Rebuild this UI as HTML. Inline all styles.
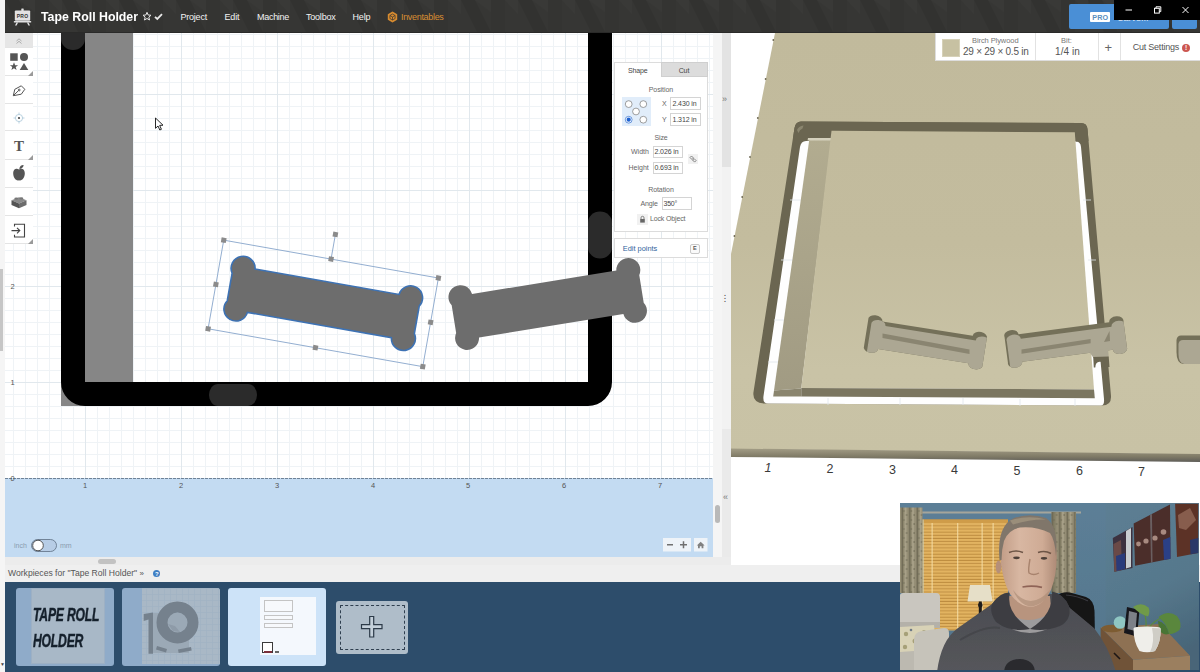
<!DOCTYPE html>
<html lang="en">
<head>
<meta charset="utf-8">
<title>Tape Roll Holder - Easel</title>
<style>
*{box-sizing:border-box;margin:0;padding:0}
html,body{width:1200px;height:672px;overflow:hidden;background:#fff}
body{position:relative;font-family:"Liberation Sans",sans-serif;color:#444;font-size:9px}
.abs{position:absolute}
.t{position:absolute;white-space:nowrap;line-height:1}
/* header */
#hdr{left:5px;top:0;width:1195px;height:33px;background:#363634;border-bottom:1px solid #2a2a29}
#hdr .m{color:#f2f2f2;font-size:9px;top:12.5px}
#title{color:#fff;font-weight:bold;font-size:13.5px;left:36px;top:10px;transform:scaleX(.913);transform-origin:0 0}
/* canvas */
#cv{left:5px;top:33px;width:708px;height:524px;overflow:hidden;background:#fff}
/* toolbar */
#tb{left:5px;top:33px;width:28px}
#tb .b{position:absolute;left:0;width:28px;background:#fff;border-bottom:1px solid #e4e4e4}
/* panel */
.pn{background:#fff;border:1px solid #dcdcdc}
.inp{position:absolute;border:1px solid #d4d4d4;background:#fff;height:12px}
.lb{color:#666;font-size:7px}
/* bottom */
#navy{left:5px;top:582px;width:1195px;height:90px;background:#2d4d6b}
</style>
</head>
<body>
<!-- left strip -->
<div class="abs" style="left:0;top:0;width:5px;height:672px;background:#f5f5f5"></div>
<div class="abs" style="left:0;top:268.500px;width:3px;height:82px;background:#c6c6c6"></div>
<div class="t" style="left:0;top:662px;font-size:5px;color:#444">▼</div>

<!-- LEFT CANVAS -->
<div id="cv" class="abs">
<svg class="abs" style="left:0;top:0" width="708" height="524" viewBox="5 33 708 524" font-family="Liberation Sans, sans-serif">
<defs>
<pattern id="gmin" x="85" y="478" width="12" height="12" patternUnits="userSpaceOnUse"><path d="M0.5 0V12M0 0.5H12" stroke="#eff3f6" stroke-width="1" fill="none"/></pattern>
<pattern id="gmaj" x="85" y="478" width="96" height="96" patternUnits="userSpaceOnUse"><path d="M0.5 0V96M0 0.5H96" stroke="#e1e8ed" stroke-width="1" fill="none"/></pattern>
<g id="bone"><rect x="-95" y="-22" width="190" height="44"/><circle cx="-85" cy="-21.5" r="12"/><circle cx="85" cy="-21.5" r="12"/><circle cx="-85" cy="21.5" r="12"/><circle cx="85" cy="21.5" r="12"/></g>
<path id="boneo" d="M-73.1,-22 H73.1 A12,12 0 1 1 95,-14 V14 A12,12 0 1 1 73.1,22 H-73.1 A12,12 0 1 1 -95,14 V-14 A12,12 0 1 1 -73.1,-22 Z"/>
</defs>
<rect x="5" y="33" width="708" height="446" fill="#fff"/>
<rect x="5" y="33" width="708" height="446" fill="url(#gmin)"/>
<rect x="5" y="33" width="708" height="446" fill="url(#gmaj)"/>
<!-- material shapes -->
<rect x="85" y="33" width="48" height="349" fill="#868686"/>
<rect x="61" y="382" width="24" height="24" fill="#868686"/>
<path d="M61,33 V382 A24,24 0 0 0 85,406 H588 A24,24 0 0 0 612,382 V33 H588 V382 H85 V33 Z" fill="#000"/>
<path d="M61,33 H85 V39 A12,11 0 0 1 61,39 Z" fill="#2b2b2b"/>
<rect x="588" y="211.500" width="24" height="47" rx="12" ry="11" fill="#2b2b2b"/>
<rect x="209" y="384" width="48" height="22" rx="9" ry="11" fill="#2b2b2b"/>
<!-- bone 2 -->
<use href="#boneo" transform="translate(547.7,304) rotate(-9.2)" fill="#6d6d6d"/>
<!-- bone 1 selected -->
<use href="#boneo" transform="translate(323.25,303.4) rotate(10)" fill="#6d6d6d" stroke="#3d72b4" stroke-width="1.6"/>
<g transform="translate(323.25,303.4) rotate(10)">
<rect x="-109" y="-45" width="218" height="90" fill="none" stroke="#8fabce" stroke-width="0.9"/>
<line x1="0" y1="-45" x2="0" y2="-70" stroke="#8fabce" stroke-width="0.9"/>
<g fill="#8b8b8b"><rect x="-111.500" y="-47.500" width="5" height="5"/><rect x="-2.500" y="-47.500" width="5" height="5"/><rect x="106.500" y="-47.500" width="5" height="5"/><rect x="-111.500" y="-2.500" width="5" height="5"/><rect x="106.500" y="-2.500" width="5" height="5"/><rect x="-111.500" y="42.500" width="5" height="5"/><rect x="-2.500" y="42.500" width="5" height="5"/><rect x="106.500" y="42.500" width="5" height="5"/><rect x="-2.500" y="-72.500" width="5" height="5"/></g>
</g>
<!-- blue margin -->
<rect x="5" y="478" width="708" height="79" fill="#c3dbf2"/>
<line x1="5" y1="478.500" x2="713" y2="478.500" stroke="#6f8296" stroke-width="1" stroke-dasharray="3 1"/>
<g font-size="7.5" fill="#555" text-anchor="middle">
<text x="85" y="488">1</text><text x="181" y="488">2</text><text x="277" y="488">3</text><text x="373" y="488">4</text><text x="468" y="488">5</text><text x="564" y="488">6</text><text x="660" y="488">7</text>
<text x="12.500" y="289">2</text><text x="12.500" y="385">1</text><text x="12.500" y="481">0</text>
</g>
<!-- inch/mm toggle -->
<text x="14" y="548" font-size="7" fill="#8a9bb0">inch</text>
<rect x="31.500" y="539.500" width="25" height="12" rx="6" fill="#b7cde6" stroke="#5d6f83" stroke-width="0.8"/>
<circle cx="38" cy="545.500" r="5.300" fill="#fff" stroke="#444" stroke-width="0.9"/>
<text x="60" y="548" font-size="7" fill="#8a9bb0">mm</text>
<!-- zoom controls -->
<rect x="663" y="538" width="28" height="13.500" fill="#eef3f8"/>
<rect x="694" y="538" width="13.500" height="13.500" fill="#eef3f8"/>
<path d="M667,544.800h6 M680,544.800h7 M683.500,541.300v7" stroke="#707070" stroke-width="1.500" fill="none"/>
<path d="M696.800,545.500 L700.700,541.800 L704.600,545.500 H703.400 V548.300 H701.600 V546.200 H699.800 V548.300 H698 V545.500 Z" fill="#808080"/>
<!-- cursor -->
<path d="M155.500,118 V128.300 L158,126 L159.800,130 L161.400,129.300 L159.700,125.400 L163,125.200 Z" fill="#fff" stroke="#111" stroke-width="0.9" stroke-linejoin="round"/>
</svg>

</div>

<!-- TOOLBAR -->
<div id="tb" class="abs">
<div class="b" style="top:0;height:15px;background:#e6e6e6"></div>
<svg class="abs" style="left:10px;top:4px" width="8" height="8" viewBox="0 0 8 8"><path d="M1.500,4 L4,1.800 L6.500,4 M1.500,6.500 L4,4.300 L6.500,6.500" fill="none" stroke="#a4a4a4" stroke-width="0.900"/></svg>
<div class="b" style="top:15px;height:28px"></div>
<div class="b" style="top:43px;height:28px"></div>
<div class="b" style="top:71px;height:27px"></div>
<div class="b" style="top:98px;height:29px"></div>
<div class="b" style="top:127px;height:28px"></div>
<div class="b" style="top:155px;height:28px"></div>
<div class="b" style="top:183px;height:28px"></div>
<svg class="abs" style="left:0;top:0" width="28" height="212" viewBox="5 33 28 212" font-family="Liberation Serif, serif">
<!-- shapes -->
<g fill="#555"><rect x="10.200" y="53.300" width="7.500" height="7.500"/><circle cx="24" cy="57" r="4"/><path d="M14,62.300 L15.100,65.200 L18.100,65.300 L15.700,67.100 L16.600,70 L14,68.300 L11.400,70 L12.300,67.100 L9.900,65.300 L12.900,65.200 Z"/><path d="M24,63 L28.300,70 H19.700 Z"/></g>
<!-- corner triangles -->
<g fill="#9a9a9a"><path d="M33,71 V76 H28 Z"/><path d="M33,155 V160 H28 Z"/><path d="M33,239 V244 H28 Z"/></g>
<!-- pen -->
<g fill="none" stroke="#555" stroke-width="1"><path d="M13.300,95.700 L14.800,89.300 L21.300,85.800 L24.800,89.300 L21.300,94.200 Z"/><path d="M13.500,95.500 L18.500,90.600"/><circle cx="19.200" cy="90" r="0.900"/></g>
<!-- target -->
<g fill="none" stroke="#a9c6d8" stroke-width="0.800"><circle cx="19" cy="118" r="3.600"/><path d="M19,112.500v2 M19,121.500v2 M13.500,118h2 M22.500,118h2"/></g><circle cx="19" cy="118" r="1.100" fill="#444"/>
<!-- T -->
<text x="19" y="151.300" font-size="15" font-weight="bold" fill="#555" text-anchor="middle">T</text>
<!-- apple -->
<g fill="#555"><path d="M19,169.500 C17,168.200 13.200,168.500 13.200,173.500 C13.200,177.500 16,181.300 19,180.200 C22,181.300 24.800,177.500 24.800,173.500 C24.800,168.500 21,168.200 19,169.500 Z"/><path d="M19.300,169 C19.300,166.500 21.500,164.800 23.600,165 C23.600,167.300 21.600,169 19.300,169 Z"/></g>
<!-- brick -->
<g><path d="M11.500,200.300 L19,197.300 L26.500,200.300 L19,203.400 Z" fill="#8a8a8a"/><path d="M11.500,200.300 L19,203.400 V208.300 L11.500,205 Z" fill="#555"/><path d="M26.500,200.300 L19,203.400 V208.300 L26.500,205 Z" fill="#6c6c6c"/><ellipse cx="16.300" cy="198.600" rx="2" ry="1.100" fill="#777"/><ellipse cx="21.300" cy="198.400" rx="2" ry="1.100" fill="#777"/></g>
<!-- import -->
<g fill="none" stroke="#444" stroke-width="1.100"><path d="M14.500,226.500 V224.300 H24.500 V237 H14.500 V234.800"/><path d="M11.500,230.600 H19.500 M17,227.800 L19.800,230.600 L17,233.400"/></g>
</svg>

</div>

<!-- SHAPE PANEL -->
<div class="abs pn" style="left:614px;top:62px;width:94px;height:169.500px"></div>
<div class="abs" style="left:661px;top:62px;width:47px;height:15px;background:#dcdcdc;border:1px solid #cfcfcf"></div>
<div class="t lb" id="p1" style="left:628px;top:66.900px;color:#444;letter-spacing:-0.15px">Shape</div>
<div class="t lb" id="p2" style="left:678.700px;top:66.900px;color:#444;letter-spacing:-0.13px">Cut</div>
<div class="t lb" id="p3" style="left:648.700px;top:86.100px;letter-spacing:-0.05px">Position</div>
<div class="abs" style="left:622px;top:96.500px;width:29px;height:29px;background:#e1edfa"></div>
<svg class="abs" style="left:622px;top:96.500px" width="29" height="29" viewBox="622 96.500 29 29"><g fill="#fff" stroke="#777" stroke-width="0.700"><circle cx="628.700" cy="103.600" r="3.400"/><circle cx="643.300" cy="103.600" r="3.400"/><circle cx="636" cy="111" r="3.400"/><circle cx="643.300" cy="119.200" r="3.400"/><circle cx="628.700" cy="119.200" r="3.400" stroke="#2f6fd0"/></g><circle cx="628.700" cy="119.200" r="2.100" fill="#1f62d0"/></svg>
<div class="t lb" style="left:662px;top:100px">X</div>
<div class="inp" style="left:670px;top:96.500px;width:30.500px;height:13px"></div>
<div class="t lb" id="p4" style="left:672.500px;top:99.900px;color:#444;letter-spacing:-0.115px">2.430 in</div>
<div class="t lb" style="left:662px;top:116px">Y</div>
<div class="inp" style="left:670px;top:112.500px;width:30.500px;height:13px"></div>
<div class="t lb" id="p5" style="left:672.500px;top:115.700px;color:#444;letter-spacing:-0.115px">1.312 in</div>
<div class="t lb" id="p6" style="left:654.500px;top:134.400px;letter-spacing:-0.15px">Size</div>
<div class="t lb" id="p7" style="left:631px;top:148px">Width</div>
<div class="inp" style="left:652.500px;top:145.500px;width:30.500px;height:12px"></div>
<div class="t lb" id="p8" style="left:654.500px;top:148px;color:#444;letter-spacing:-0.115px">2.026 in</div>
<div class="t lb" id="p9" style="left:628.500px;top:163.900px">Height</div>
<div class="inp" style="left:652.500px;top:161.500px;width:30.500px;height:12px"></div>
<div class="t lb" id="p10" style="left:654.500px;top:163.900px;color:#444;letter-spacing:-0.115px">0.693 in</div>
<svg class="abs" style="left:688px;top:154px" width="10" height="10" viewBox="0 0 10 10"><rect x="0" y="0" width="10" height="10" fill="#f1f1f1"/><g fill="none" stroke="#777" stroke-width="0.900"><path d="M2,3.500 L3.500,2 L5.500,4 L4,5.500 Z M4.600,6 L6.100,4.600 L8.100,6.600 L6.600,8.100 Z"/></g></svg>
<div class="t lb" id="p11" style="left:648.200px;top:185.700px;letter-spacing:-0.07px">Rotation</div>
<div class="t lb" id="p12" style="left:640.600px;top:199.900px;letter-spacing:-0.18px">Angle</div>
<div class="inp" style="left:661.500px;top:197px;width:30px;height:12.500px"></div>
<div class="t lb" id="p13" style="left:663.500px;top:199.900px;color:#444;letter-spacing:-0.25px">350°</div>
<svg class="abs" style="left:636.500px;top:213.500px" width="11" height="11" viewBox="0 0 11 11"><rect width="11" height="11" fill="#f1f1f1"/><rect x="3.200" y="5" width="4.600" height="3.600" fill="#666"/><path d="M4,5 V3.800 A1.500,1.500 0 0 1 7,3.800 V5" fill="none" stroke="#666" stroke-width="0.800"/></svg>
<div class="t lb" id="p14" style="left:649.900px;top:215.400px;letter-spacing:-0.14px">Lock Object</div>
<div class="abs pn" style="left:614px;top:237.500px;width:94px;height:20.500px"></div>
<div class="t lb" id="p15" style="left:622.800px;top:244.500px;color:#2f639c;font-size:7.400px">Edit points</div>
<div class="abs" style="left:689.500px;top:243.500px;width:10.500px;height:10px;border:1px solid #c9c9c9;border-radius:2px;background:#fafafa"></div>
<div class="t" style="left:693px;top:246px;font-size:5.500px;color:#555;font-weight:bold">E</div>


<!-- SCROLL + DIVIDER -->
<div class="abs" style="left:713px;top:33px;width:8.500px;height:524px;background:#f5f5f5"></div>
<div class="abs" style="left:715px;top:505px;width:5px;height:18px;background:#b9b9b9;border-radius:3px"></div>
<div class="abs" style="left:721.500px;top:33px;width:9.500px;height:524px;background:#f2f2f2"></div>
<div class="abs" style="left:721.500px;top:33px;width:9.500px;height:133.500px;background:#e3e3e3"></div>
<div class="abs" style="left:721.500px;top:428.500px;width:9.500px;height:128.500px;background:#eaeaea"></div>
<div class="t" style="left:722px;top:95px;font-size:9px;color:#777">»</div>
<div class="t" style="left:723px;top:493px;font-size:9px;color:#777">«</div>
<div class="t" style="left:724px;top:292px;font-size:7px;color:#555;line-height:3px;font-weight:bold">.<br>.<br>.</div>

<!-- 3D VIEW -->
<div class="abs" style="left:731px;top:33px;width:469px;height:532px;background:#fff;overflow:hidden">
<svg class="abs" style="left:0;top:0" width="469" height="532" viewBox="731 33 469 532" font-family="Liberation Sans, sans-serif">
<defs>
<path id="b3" d="M-76.200,-34 H76.200 A12,12 0 1 1 100,-32 V32 A12,12 0 1 1 76.200,34 H-76.200 A12,12 0 1 1 -100,32 V-32 A12,12 0 1 1 -76.200,-34 Z"/>
<clipPath id="cb1"><use href="#b3" transform="translate(925.400,342.300) rotate(9) scale(0.600,0.410)"/></clipPath>
<clipPath id="cb2"><use href="#b3" transform="translate(1065.700,342) rotate(-7.500) scale(0.600,0.410)"/></clipPath>
<linearGradient id="wd" x1="0" y1="33" x2="0" y2="455" gradientUnits="userSpaceOnUse"><stop offset="0" stop-color="#c1ba9c"/><stop offset="0.500" stop-color="#c3bc9e"/><stop offset="0.800" stop-color="#c9c3a6"/><stop offset="1" stop-color="#c8c2a5"/></linearGradient>
<linearGradient id="stp" x1="0" y1="138" x2="0" y2="390" gradientUnits="userSpaceOnUse"><stop offset="0" stop-color="#b2ac90"/><stop offset="1" stop-color="#a19b83"/></linearGradient>
<linearGradient id="fe" x1="0" y1="0" x2="0" y2="1"><stop offset="0" stop-color="#a39d86"/><stop offset="0.600" stop-color="#7f7a66"/><stop offset="1" stop-color="#5e5d58"/></linearGradient>
</defs>
<!-- board top -->
<path d="M775,33 H1200 V454.500 L731,449 V254 Z" fill="url(#wd)"/>
<g fill="#6b6651"><circle cx="773.300" cy="40" r="0.900"/><circle cx="765.600" cy="79" r="0.900"/><circle cx="757.800" cy="118" r="0.900"/><circle cx="750" cy="157" r="0.900"/><circle cx="742.200" cy="197" r="0.900"/><circle cx="734.400" cy="236" r="0.900"/></g>
<!-- board front edge -->
<path d="M731,448.500 L1200,454 V462 L731,457 Z" fill="url(#fe)"/>
<!-- pocket outer (walls) -->
<path id="pko" d="M801,121.500 L1081,123 Q1087,123 1087.500,129 L1111,396 Q1111.500,405.500 1102,405.500 L765,403.500 Q752,403 753.500,392 L794.500,128 Q795.500,121.500 801,121.500 Z" fill="#6b6651"/>
<!-- pocket floor (white) -->
<path d="M806,141 Q801,141 800,147 L763.500,396 Q762.500,403.500 768,403.500 L1101,405.500 Q1104.500,405.500 1104,399 L1081,147 Q1080.500,141.500 1076,141.500 Z" fill="#fefefe"/>
<g stroke="#dfe6ec" stroke-width="0.800"><path d="M790,200 h12 M781,260 h12 M774,320 h12 M768,362 h12 M1083,200 h8 M1088,260 h8 M1094,330 h8 M828,398 v7 M900,398 v7 M963,398 v7 M1020,399 v7 M1075,399 v7"/></g>
<!-- top wall -->
<path d="M801,121.500 L1081,123 Q1087,123 1087.500,129 L1088.500,141 L1076,141.500 L1074.800,132.300 L831.500,130.800 L830,138 L806,138 Q800,139 797.500,149 L793,138 L794.500,128 Q795.500,121.500 801,121.500 Z" fill="#6b6651"/>
<path d="M797,130 Q798.500,126 803.500,125.500 L802.500,128.500 Q799.500,129.500 798.500,133 Z" fill="#8b866f"/>
<!-- step (lower ledge) -->
<path d="M809.500,138 L831.500,138 L801.300,388.500 L774,390.500 Z" fill="url(#stp)"/>
<path d="M774,390.500 L801.300,388.500 L801.300,396.500 L773.200,396.500 Z" fill="#8a856e"/>
<path d="M808,138 h23 v2.500 h-23.500 Z" fill="#d5d1bd"/>
<!-- island top -->
<path d="M831.500,130.800 L1074.800,132.300 L1094,389.500 L801.300,388 Z" fill="url(#wd)"/>
<!-- island front face -->
<path d="M801.300,388 L1094,389.500 L1094.800,398.200 L801.300,396.500 Z" fill="#7b7660"/>
<!-- bone pocket 1 -->
<use href="#b3" transform="translate(925.400,342.300) rotate(9) scale(0.600,0.410)" fill="#747059"/>
<g clip-path="url(#cb1)"><use href="#b3" transform="translate(928.400,347) rotate(9) scale(0.600,0.410)" fill="#aca793"/>
<path d="M882.500,333.600 L969.500,349.600 L969.500,353.900 L882.500,337.900 Z" fill="#8a8571"/></g>
<!-- bone pocket 2 -->
<use href="#b3" transform="translate(1065.700,342) rotate(-7.500) scale(0.600,0.410)" fill="#747059"/>
<g clip-path="url(#cb2)"><use href="#b3" transform="translate(1068,346.500) rotate(-7.500) scale(0.600,0.410)" fill="#aca793"/>
<path d="M1021.500,349.500 L1090.600,339 L1090.600,343.300 L1021.500,353.800 Z" fill="#8a8571"/>
<path d="M1104,342 L1109.500,331 L1110,341 Z" fill="#8a8571"/></g>
<!-- right wall pieces around bone 2 -->
<path d="M1089,351.500 L1108,348.800 L1108.800,357.500 L1093.500,358 Z" fill="#aca793"/>
<path d="M1093.200,357 L1108.700,356.500 L1109.500,367 L1104.300,367 L1104,362 L1099.500,361.800 Q1095.500,362 1095.300,367.500 L1093.800,367.500 Z" fill="#6b6651"/>
<!-- third pocket at right edge -->
<path d="M1181,335.500 H1200 V364 H1183 Q1176.500,363 1176.500,352 V340 Q1177,335.500 1181,335.500 Z" fill="#747059"/>
<path d="M1183,340 H1200 V364 H1184 Q1178.500,363 1178.500,354 V344 Q1179,340 1183,340 Z" fill="#aca793"/>
<!-- axis numbers -->
<g font-size="12.500" fill="#3a3a3a" text-anchor="middle">
<text x="768" y="471.500" font-style="italic">1</text><text x="830" y="472.500">2</text><text x="892.500" y="473.500">3</text><text x="954.500" y="474">4</text><text x="1017" y="474.500">5</text><text x="1079.500" y="475">6</text><text x="1141.500" y="475.500">7</text>
</g>
</svg>

</div>

<!-- MATERIAL BAR -->
<div class="abs" style="left:935px;top:33px;width:265px;height:27.500px;background:#fff;border-left:1px solid #ddd;border-bottom:1px solid #ddd"></div>
<div class="abs" style="left:1035px;top:33px;width:1px;height:27px;background:#e2e2e2"></div>
<div class="abs" style="left:1098px;top:33px;width:1px;height:27px;background:#e2e2e2"></div>
<div class="abs" style="left:1120px;top:33px;width:1px;height:27px;background:#e2e2e2"></div>
<div class="abs" style="left:942px;top:38.500px;width:18px;height:18px;background:#c7c1a2;border:1px solid #d6d1b8"></div>
<div class="t" id="mb1" style="left:972px;top:37px;font-size:7.500px;color:#777;letter-spacing:-0.08px">Birch Plywood</div>
<div class="t" id="mb2" style="left:963px;top:47px;font-size:10px;color:#555;letter-spacing:-0.25px">29 × 29 × 0.5 in</div>
<div class="t" id="mb3" style="left:1061px;top:37px;font-size:7.500px;color:#777">Bit:</div>
<div class="t" id="mb4" style="left:1055px;top:47px;font-size:10px;color:#555;letter-spacing:0.09px">1/4 in</div>
<div class="t" id="mb5" style="left:1104.500px;top:40.500px;font-size:13px;color:#666">+</div>
<div class="t" id="mb6" style="left:1132.800px;top:42.500px;font-size:9px;color:#555;letter-spacing:-0.24px">Cut Settings</div>
<div class="abs" style="left:1182px;top:43.500px;width:8px;height:8px;border-radius:50%;background:#cc5750"></div>
<div class="t" style="left:1185px;top:44.500px;font-size:6.500px;color:#fff;font-weight:bold">!</div>


<!-- BOTTOM STRIPS -->
<div class="abs" style="left:5px;top:557px;width:726px;height:9px;background:#ececec"></div>
<div class="abs" style="left:98px;top:559px;width:18px;height:5px;background:#c2c2c2;border-radius:3px"></div>
<div class="abs" style="left:5px;top:565px;width:1195px;height:17px;background:#efefef"></div>
<div class="t" id="wplabel" style="left:8px;top:569px;font-size:8.6px;color:#555">Workpieces for "Tape Roll Holder" <span style="font-size:8px">»</span></div>
<div class="abs" style="left:153px;top:570px;width:7px;height:7px;border-radius:50%;background:#3f7fc4"></div>
<div class="t" style="left:155px;top:571px;font-size:6px;color:#fff;font-weight:bold">?</div>
<div id="navy" class="abs"></div>
<!-- thumb 1 -->
<div class="abs" style="left:16px;top:588px;width:98px;height:78px;background:#8fabc9;border-radius:3px;overflow:hidden">
<div class="abs" style="left:15px;top:0;width:74px;height:76px;background:#a8b8c7;border:1px solid #9db0c4"></div>
<div class="t" id="th1a" style="left:17px;top:17px;font-size:19px;font-weight:bold;font-style:italic;color:#15202c;-webkit-text-stroke:.5px #15202c;transform:scaleX(.64);transform-origin:0 0;letter-spacing:-.3px">TAPE ROLL</div>
<div class="t" id="th1b" style="left:17px;top:43px;font-size:19px;font-weight:bold;font-style:italic;color:#15202c;-webkit-text-stroke:.5px #15202c;transform:scaleX(.64);transform-origin:0 0;letter-spacing:-.3px">HOLDER</div>
</div>
<!-- thumb 2 -->
<div class="abs" style="left:122px;top:588px;width:98px;height:78px;background:#8fabc9;border-radius:3px;overflow:hidden">
<svg class="abs" style="left:0;top:0" width="98" height="78" viewBox="0 0 98 78">
<defs><pattern id="tg" width="6" height="6" patternUnits="userSpaceOnUse"><path d="M0.500 0V6M0 0.500H6" stroke="#9fb1c3" stroke-width="0.600" fill="none"/></pattern></defs>
<rect x="20" y="0" width="78" height="76" fill="#a9b8c6"/><rect x="20" y="0" width="78" height="76" fill="url(#tg)"/>
<rect x="28" y="25" width="39" height="40" fill="#9ba9b6"/>
<path d="M21.700,26 L31,24.500 V65.700 H26.500 V31.500 L21.700,33 Z" fill="#75818d"/>
<circle cx="55.500" cy="34.500" r="15.500" fill="none" stroke="#75818d" stroke-width="11"/>
<path d="M46,36 L51,43 L58,44 L53,38 Z" fill="#8e9ba8"/>
<path d="M35,58 L45,61 L44,64.500 L34,61.500 Z M56,61.500 L69,59 L69.700,62.500 L56.700,65 Z" fill="#75818d"/>
</svg>
</div>
<!-- thumb 3 (selected) -->
<div class="abs" style="left:228px;top:588px;width:98px;height:78px;background:#cde3f8;border-radius:3px;overflow:hidden">
<div class="abs" style="left:32px;top:9px;width:56px;height:58px;background:#f4f8fd"></div>
<div class="abs" style="left:36px;top:12px;width:29px;height:12px;border:1px solid #c4c4c4;background:#f7f9fc"></div>
<div class="abs" style="left:36px;top:27px;width:29px;height:5px;border:1px solid #c4c4c4;background:#f7f9fc"></div>
<div class="abs" style="left:36px;top:34.500px;width:29px;height:5px;border:1px solid #c4c4c4;background:#f7f9fc"></div>
<div class="abs" style="left:33.500px;top:54px;width:11px;height:11px;border:1.500px solid #3a3a3a;background:#fff"></div>
<div class="abs" style="left:36px;top:63px;width:8px;height:1.500px;background:#7b2f3a"></div>
<div class="abs" style="left:47px;top:63px;width:4px;height:1.500px;background:#666"></div>
</div>
<!-- add -->
<div class="abs" style="left:336px;top:601px;width:72px;height:53px;background:#afbdc9;border-radius:3px"></div>
<div class="abs" style="left:339.500px;top:605px;width:65.500px;height:45px;border:1.200px dashed #2f3f4f;border-radius:1px"></div>
<svg class="abs" style="left:360px;top:615px" width="24" height="24" viewBox="0 0 24 24"><path d="M9.700,1.500 H13.700 V9.700 H22 V13.700 H13.700 V22 H9.700 V13.700 H1.500 V9.700 H9.700 Z" fill="#c4d0da" stroke="#2c3a48" stroke-width="1.200"/></svg>


<!-- HEADER -->
<div id="hdr" class="abs">
<svg class="abs" style="left:0;top:0" width="1195" height="32" viewBox="0 0 1195 32"><defs><pattern id="hx" width="57" height="32" patternUnits="userSpaceOnUse"><path d="M0,0 H14 L30,32 H16 Z" fill="#2f2f2d"/><path d="M30,0 H44 L44,32 H30 Z" fill="#323230"/><path d="M44,0 L57,0 L57,14 Z" fill="#3c3c3a"/><path d="M14,0 H30 V12 Z" fill="#3b3b39"/></pattern></defs><rect width="1195" height="32" fill="url(#hx)" opacity="0.550"/></svg>
<svg class="abs" style="left:8px;top:8px" width="20" height="18" viewBox="0 0 20 18">
<g fill="#e2e2e2"><rect x="8.300" y="0.500" width="2.400" height="2.500" rx="0.500"/><rect x="1.800" y="2.500" width="15.400" height="10.200" rx="1"/><rect x="0.800" y="13" width="17.400" height="1.500" rx="0.500"/><path d="M3.500,14.500 L2,17.500 H3.600 L5.100,14.500 Z M15.500,14.500 L17,17.500 H15.400 L13.900,14.500 Z"/></g>
<text x="9.500" y="9.700" font-size="5" font-weight="bold" fill="#323232" text-anchor="middle" font-family="Liberation Sans, sans-serif" letter-spacing="0.300">PRO</text>
</svg>
<div class="t" id="title">Tape Roll Holder</div>
<svg class="abs" style="left:137px;top:11px" width="24" height="12" viewBox="0 0 24 12"><path d="M5,1.300 L6.150,4 L9,4.250 L6.850,6.150 L7.500,9 L5,7.500 L2.500,9 L3.150,6.150 L1,4.250 L3.850,4 Z" fill="none" stroke="#e8e8e8" stroke-width="1"/><path d="M13,5.800 L15.300,8 L20,3.200" fill="none" stroke="#e8e8e8" stroke-width="1.800"/></svg>
<div class="t m" id="m1" style="left:175.400px;letter-spacing:-0.2px">Project</div>
<div class="t m" id="m2" style="left:219.500px;letter-spacing:-0.13px">Edit</div>
<div class="t m" id="m3" style="left:252px;letter-spacing:-0.29px">Machine</div>
<div class="t m" id="m4" style="left:301px;letter-spacing:-0.22px">Toolbox</div>
<div class="t m" id="m5" style="left:347.500px;letter-spacing:-0.13px">Help</div>
<svg class="abs" style="left:382px;top:11px" width="11" height="12" viewBox="0 0 11 12"><path d="M5.500,0.600 L10.200,3.300 V8.700 L5.500,11.400 L0.800,8.700 V3.300 Z" fill="#d78b2f"/><path d="M5.500,3 L8.100,4.500 V7.500 L5.500,9 L2.900,7.500 V4.500 Z M5.500,6 V9 M5.500,6 L2.900,4.500 M5.500,6 L8.100,4.500" fill="none" stroke="#323232" stroke-width="0.700"/></svg>
<div class="t m" id="m6" style="left:396px;color:#d98e33;letter-spacing:-0.32px">Inventables</div>
<!-- carve button -->
<div class="abs" style="left:1064px;top:4px;width:99.500px;height:25px;background:#4a8fd6;border-radius:2px"></div>
<div class="abs" style="left:1167px;top:4px;width:25px;height:25px;background:#4a8fd6;border-radius:2px"></div>
<div class="abs" style="left:1085px;top:12px;width:20px;height:10px;background:#fff;border-radius:1px"></div>
<div class="t" style="left:1087.300px;top:13.600px;font-size:7.200px;font-weight:bold;color:#5a8fc0;letter-spacing:.1px">PRO</div>
<div class="t" style="left:1112px;top:13.500px;font-size:9px;color:#dfeaf7">Carve...</div>
<div class="t" style="left:1177.500px;top:14px;font-size:8px;color:#dfeaf7">v</div>

</div>

<!-- WEBCAM -->
<svg class="abs" style="left:900px;top:503px" width="299" height="167" viewBox="900 503 299 167">
<defs>
<filter id="sf" x="-2%" y="-2%" width="104%" height="104%"><feGaussianBlur stdDeviation="0.550"/></filter>
<filter id="sf2" x="-5%" y="-5%" width="110%" height="110%"><feGaussianBlur stdDeviation="1.300"/></filter>
<linearGradient id="wl" x1="0" y1="0" x2="0" y2="1"><stop offset="0" stop-color="#5c7f97"/><stop offset="1" stop-color="#54758b"/></linearGradient>
<linearGradient id="wr" x1="0" y1="0" x2="0.300" y2="1"><stop offset="0" stop-color="#5d7f94"/><stop offset="0.600" stop-color="#56788c"/><stop offset="1" stop-color="#486578"/></linearGradient>
<pattern id="bl" x="922" y="520" width="6" height="3.150" patternUnits="userSpaceOnUse"><rect width="6" height="3.150" fill="#e2b361"/><rect y="2.200" width="6" height="0.950" fill="#bd8c3f"/></pattern>
<pattern id="cu" x="900" y="508" width="7.500" height="9" patternUnits="userSpaceOnUse"><rect width="7.500" height="9" fill="#958e75"/><rect x="1.500" width="1.600" height="9" fill="#6e6955"/><rect x="4.800" width="1.500" height="9" fill="#aca58c"/><circle cx="3.800" cy="3" r="1" fill="#7d7862"/><circle cx="6.800" cy="7" r="1" fill="#7d7862"/></pattern>
<linearGradient id="sk" x1="0" y1="0" x2="1" y2="0"><stop offset="0" stop-color="#c09b85"/><stop offset="0.350" stop-color="#d8b7a2"/><stop offset="0.750" stop-color="#cfab95"/><stop offset="1" stop-color="#ad8a76"/></linearGradient>
<linearGradient id="hd" x1="0" y1="0" x2="0" y2="1"><stop offset="0" stop-color="#4b4c51"/><stop offset="1" stop-color="#55565b"/></linearGradient>
<clipPath id="wc"><rect x="900" y="503" width="299" height="167"/></clipPath>
</defs>
<g clip-path="url(#wc)"><g filter="url(#sf)">
<rect x="895" y="498" width="215" height="180" fill="url(#wl)"/>
<rect x="1105.800" y="498" width="100" height="180" fill="url(#wr)"/>
<!-- window -->
<rect x="922" y="519.500" width="86" height="111" fill="url(#bl)"/>
<g fill="#f6dfa8" opacity="0.750"><rect x="931.500" y="523" width="1.300" height="108"/><rect x="957" y="523" width="1.300" height="108"/><rect x="981.500" y="523" width="1.300" height="108"/><rect x="992.500" y="523" width="1.300" height="108"/></g>
<rect x="922" y="519.500" width="86" height="3.500" fill="#cf9c48"/><rect x="922" y="519.500" width="2" height="111" fill="#c8cdb8" opacity="0.600"/>
<!-- curtain rod -->
<rect x="921" y="511.500" width="160" height="2" fill="#a5a59b"/>
<!-- curtains -->
<rect x="900" y="507.500" width="22.500" height="85.500" fill="url(#cu)"/>
<rect x="1051.500" y="512" width="24.500" height="81" fill="url(#cu)"/>
<rect x="1051.500" y="512" width="5" height="81" fill="#6c6852" opacity="0.500"/>
<!-- pictures -->
<path d="M1112.800,538.100 L1132.500,527 V567.900 L1114.300,571.700 Z" fill="#3c3340"/>
<path d="M1113.500,544 L1121,540 L1122,570 L1114.300,571.700 Z" fill="#6a4a46"/>
<path d="M1126,531 L1131,528 V567 L1126,568.500 Z" fill="#c9cdd0"/>
<path d="M1116,556 L1125,553 L1125,569 L1116.500,571 Z" fill="#2a3a7a"/>
<path d="M1133.700,523.400 L1170,504.500 L1170.500,558.800 L1135,565.800 Z" fill="#4b2d2b"/>
<path d="M1150,515 L1152,514 L1152.500,562.300 L1151,562.600 Z" fill="#8a8f96" opacity="0.500"/>
<g fill="#a88a80"><circle cx="1138.500" cy="544" r="2.400"/><circle cx="1146" cy="541" r="2.600"/><circle cx="1155" cy="538" r="2.600"/><circle cx="1163.500" cy="532" r="2.800"/></g>
<path d="M1163,540 L1170.300,537 L1170.500,558.800 L1164,560 Z" fill="#2b3f86"/>
<path d="M1175.100,503.700 H1198.200 V552.900 L1177,557 Z" fill="#5b3328"/>
<path d="M1178,515 L1190,508 L1196,520 L1186,530 L1179,528 Z" fill="#9a6f5c" opacity="0.700"/>
<path d="M1190,540 L1198.200,538 V552.900 L1190.500,554.300 Z" fill="#2a3768"/>
<!-- chair -->
<path d="M1058,595 Q1062,591.500 1070,592.500 L1086,597 Q1094,600 1094.500,611 L1095,640 L1058,640 Z" fill="#141416"/>
<path d="M1066,595 Q1078,596 1088,601" stroke="#3a3a3e" stroke-width="1.200" fill="none"/>
<!-- couch -->
<path d="M900,595.500 Q900,593 903,593 L936,593 Q940,593 940,597 L940,624 L900,624 Z" fill="#c9c6bf"/>
<rect x="900" y="622" width="40" height="6" fill="#b4b1a9"/>
<path d="M900,627 L934,625 L937,652 L900,654 Z" fill="#d8d2b6"/>
<g fill="#a6a078"><circle cx="906" cy="634" r="2.200"/><circle cx="915" cy="641" r="2.500"/><circle cx="924" cy="632" r="2"/><circle cx="905" cy="647" r="2.200"/><circle cx="928" cy="645" r="2"/></g>
<g fill="#6e7a86"><circle cx="911" cy="630" r="1.300"/><circle cx="920" cy="648" r="1.400"/></g>
<path d="M914,640 Q914,632 922,631 L944,628 Q949,628 949,633 L949,672 L914,672 Z" fill="#c6c3ba"/>
<path d="M900,652 L914,651 L914,672 L900,672 Z" fill="#bcb9b0"/>
<!-- lamp -->
<path d="M970,585 H990 L992.500,601.500 H967.500 Z" fill="#e6dfc8"/>
<rect x="978.800" y="601.500" width="3" height="13" fill="#1f1d1b"/>
<ellipse cx="980.300" cy="605" rx="2.300" ry="2.500" fill="#1f1d1b"/>
<!-- desk -->
<path d="M1100.600,627.400 L1160,624 L1190,655.800 L1133,659.700 Z" fill="#8e7153"/>
<path d="M1133,659.700 L1190,655.800 L1190,672 L1133,672 Z" fill="#9b7f5f"/>
<path d="M1100.600,627.400 L1133,659.700 L1133,672 L1112,672 L1100.600,640 Z" fill="#6f5238"/>
<path d="M1114,653 l6,6" stroke="#1f1712" stroke-width="1.600"/>
<!-- basket, teal, frame -->
<ellipse cx="1112" cy="628.500" rx="10.500" ry="3.800" fill="#7d5c30"/>
<ellipse cx="1120" cy="622.500" rx="6.300" ry="6.300" fill="#8fc6c2"/>
<path d="M1127,607 L1139.500,610 L1137,636.500 L1124,633 Z" fill="#17171a"/>
<path d="M1129,611 L1137,613 L1135.500,631 L1127.500,629 Z" fill="#7c8088"/>
<!-- plant -->
<path d="M1146,628 Q1147,616 1142,609" stroke="#5a8a3f" stroke-width="1.200" fill="none"/>
<path d="M1149,628 Q1154,620 1166,616" stroke="#5a8a3f" stroke-width="1.200" fill="none"/>
<path d="M1133,607 Q1141,601.500 1148.500,607.500 Q1150.500,612 1148,616.500 Q1139,614 1133,607 Z" fill="#6f9a48"/>
<path d="M1158.500,617 Q1168,609.500 1177,616 Q1182.500,623 1179.500,630 Q1173.500,634.500 1169,634 Q1167,624 1158.500,617 Z" fill="#5a873c"/>
<path d="M1158,621 Q1166,622 1169,634 Q1162,636 1159,629 Z" fill="#4a7534"/>
<path d="M1133.500,628.500 Q1133.500,626.600 1147,626.600 Q1160.700,626.600 1160.700,628.500 Q1161,642 1155,651 Q1147,653.500 1139.500,651 Q1133.500,642 1133.500,628.500 Z" fill="#efeeea"/>
<path d="M1152,628 Q1160.700,628 1160.700,629 Q1161,642 1155,651 Q1152,652 1150,652 Q1155,642 1152,628 Z" fill="#cfcdc6"/>
<!-- hoodie body -->
<path d="M937,672 Q941,640 958,628 L992,604 Q1000,594 1010,596 L1052,594 Q1062,596 1070,608 L1094,628 Q1108,645 1116,672 Z" fill="url(#hd)"/>
<!-- neck/shirt -->
<path d="M1008,596 L1050,596 L1052,622 L1030,632 L1008,622 Z" fill="#b8947e"/>
<path d="M1007,612 Q1028,628 1052,612 L1053,626 Q1030,640 1006,626 Z" fill="#9c9b9d"/>
<!-- hood folds -->
<path d="M992,604 Q1000,592 1010,592.500 Q1005,612 1030,629 Q1010,633 996,622 Q989,612 992,604 Z" fill="#3d3e43"/>
<path d="M1052,591.500 Q1064,594 1069,606 Q1072,620 1060,626 Q1045,632 1030,629 Q1054,614 1052,591.500 Z" fill="#3d3e43"/>
<path d="M960,640 Q985,625 1000,628" stroke="#45464b" stroke-width="2" fill="none"/>
<!-- head -->
<path d="M999.500,548 Q998,521 1027,518 Q1056,518 1056.500,548 Q1058,572 1051,590 Q1043,606 1031,607 Q1019,606 1010,594 Q1001,578 999.500,548 Z" fill="url(#sk)"/>
<ellipse cx="998.500" cy="567" rx="2.800" ry="6.500" fill="#b58f79"/>
<!-- hair -->
<path d="M999.500,560 Q996.500,526 1014,518 Q1030,512.500 1046,518 Q1058.500,526 1056,556 Q1055,540 1050,533 Q1036,526 1020,527.500 Q1008,530 1004,541 Q1001.500,550 1001.500,560 Z" fill="#80766a"/>
<path d="M1010,520.500 Q1028,514.500 1046,519.500 Q1030,519 1013,524.500 Z" fill="#9a8e7a"/>
<!-- face features -->
<g filter="url(#sf)"><path d="M1009,552.500 Q1016,549.500 1023,552.500" stroke="#6d5546" stroke-width="1.600" fill="none"/><path d="M1038,552.500 Q1045,550 1051,553.500" stroke="#6d5546" stroke-width="1.600" fill="none"/>
<ellipse cx="1016.500" cy="557.800" rx="3.300" ry="1.400" fill="#4d4038"/><ellipse cx="1044" cy="558.300" rx="3.200" ry="1.400" fill="#4d4038"/>
<path d="M1030,559 Q1028,570 1029,573 Q1033.500,576 1039,573" stroke="#a8836d" stroke-width="1.400" fill="none"/>
<path d="M1022.500,587 Q1032,585 1042,587.300" stroke="#8f6457" stroke-width="1.700" fill="none"/>
<path d="M1013,590 Q1030,612 1050,590 Q1046,604 1031,606.500 Q1019,605 1013,590 Z" fill="#a98973" opacity="0.600"/></g>
<!-- mic -->
<path d="M1004,672 Q1005,659.500 1019.500,659 Q1034,659.500 1035,672 Z" fill="#2a2a2e"/>
</g></g>
</svg>
<div class="abs" style="left:1199px;top:582px;width:1px;height:90px;background:#2d4d6b"></div>
<div class="abs" style="left:900px;top:670px;width:300px;height:2px;background:#2d4d6b"></div>


<!-- WINDOW CONTROLS -->
<div class="abs" style="left:1114px;top:0;width:86px;height:20px;background:#000"></div>
<svg class="abs" style="left:1114px;top:0" width="86" height="20" viewBox="1114 0 86 20"><g fill="none" stroke="#fff" stroke-width="1"><path d="M1125.500,10 h6.500"/><rect x="1154.500" y="8.300" width="4.800" height="4.800"/><path d="M1156,8.300 V6.800 H1160.800 V11.600 H1159.300"/><path d="M1182.500,7 L1188.500,13 M1188.500,7 L1182.500,13"/></g></svg>

</body>
</html>
